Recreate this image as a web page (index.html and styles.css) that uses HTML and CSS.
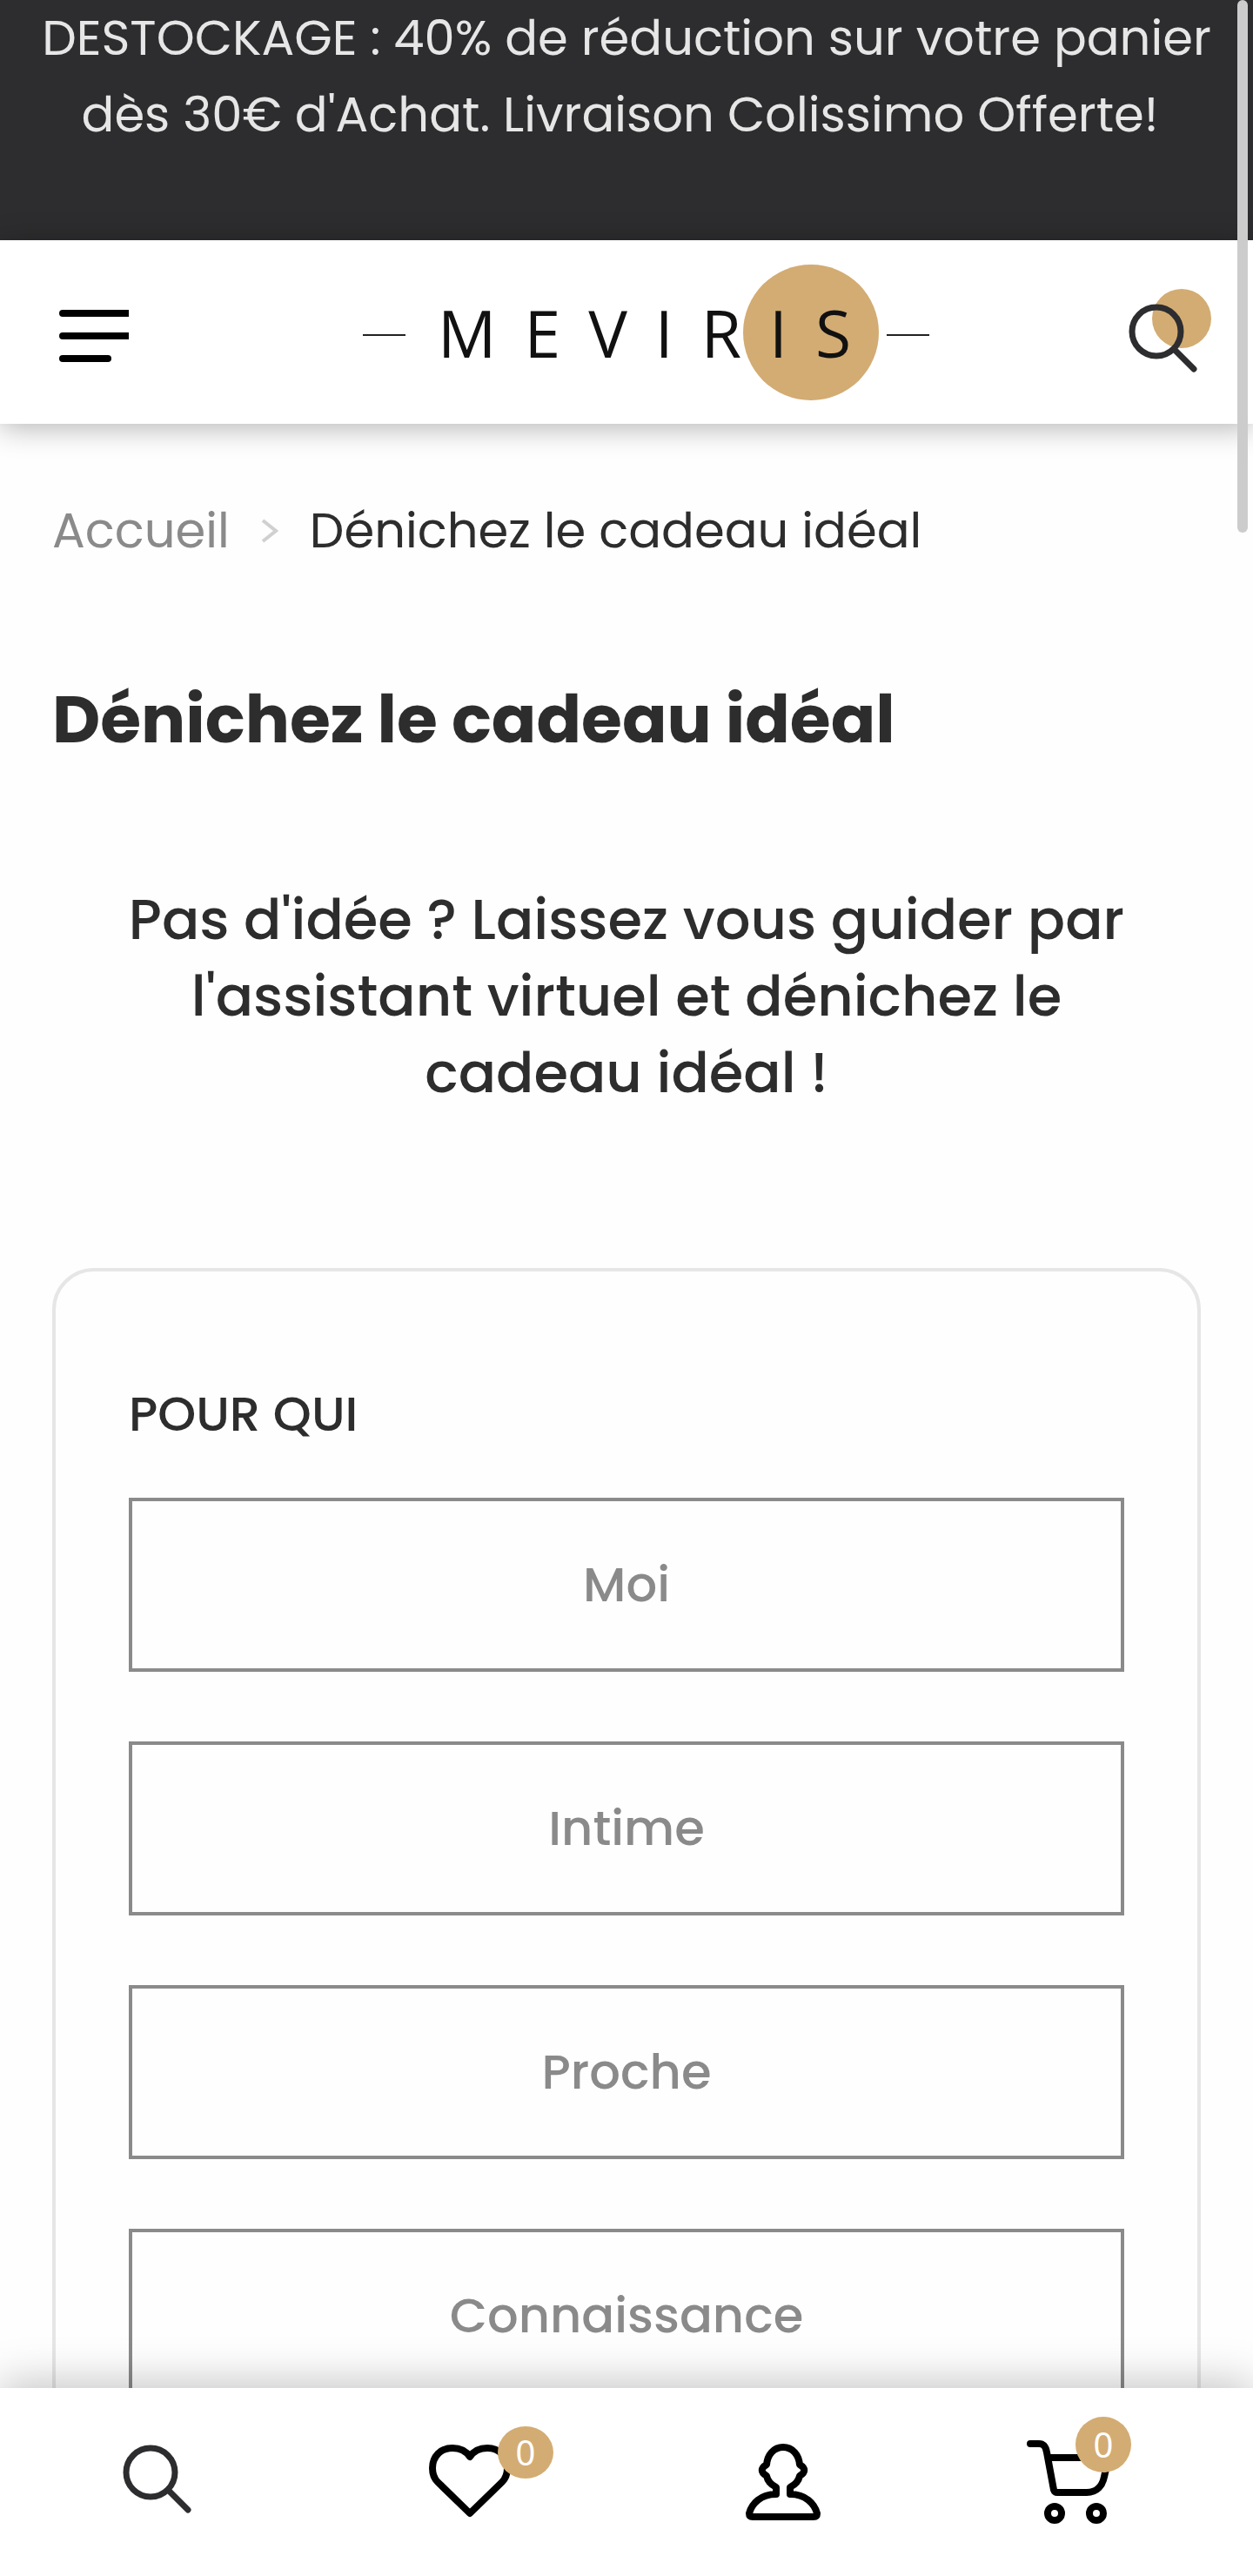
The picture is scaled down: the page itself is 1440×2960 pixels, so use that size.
FILE: index.html
```html
<!DOCTYPE html>
<html lang="fr">
<head>
    <meta charset="UTF-8">
    <meta name="viewport" content="width=device-width, initial-scale=1.0">
    <title>Dénichez le cadeau idéal - Meviris</title>
    <link rel="stylesheet" href="styles.css">
</head>
<body>
    <div class="banner">
        <p>DESTOCKAGE : 40% de réduction sur votre panier dès 30€ d'Achat. Livraison Colissimo Offerte!&nbsp;</p>
    </div>

    <header class="header">
        <button class="icon-button" aria-label="Menu">
            <svg width="80" height="68" viewBox="0 -8 80 68">
                <path d="M80 0H4a4 4 0 0 0 0 8H80zM80 26H4a4 4 0 0 0 0 8H80z"/>
                <rect y="52" width="60" height="8" rx="4"/>
            </svg>
        </button>
        <a class="logo" href="#" aria-label="Meviris">
            <svg width="652" height="156" viewBox="0 0 652 156">
                <circle cx="515" cy="78" r="78" fill="#d3ac73"/>
                <path d="M0 81H49M602 81H651" stroke="#222" stroke-width="2"/>
                <text class="logo-text" x="86" y="107">MEVIRIS</text>
            </svg>
        </a>
        <button class="icon-button" aria-label="Rechercher">
            <svg width="96" height="112" viewBox="0 0 96 112">
                <circle cx="61" cy="40" r="34" fill="#d3ac73"/>
                <g fill="none" stroke="#2d2d2f" stroke-width="7" stroke-linecap="round">
                    <circle cx="32" cy="55" r="28"/>
                    <path d="M53 76L75 98"/>
                </g>
            </svg>
        </button>
    </header>

    <main class="main">
        <nav class="breadcrumb" aria-label="Fil d'Ariane">
            <a href="#">Accueil</a>
            <svg width="20" height="28" viewBox="0 0 20 28">
                <path d="M2 2L17 14L2 26" fill="none" stroke="#d0d0d0" stroke-width="4"/>
            </svg>
            <span>Dénichez le cadeau idéal</span>
        </nav>

        <h1>Dénichez le cadeau idéal</h1>
        <p class="intro">Pas d'idée ? Laissez vous guider par l'assistant virtuel et dénichez le cadeau idéal !</p>

        <section class="card">
            <h2>POUR QUI</h2>
            <div class="choices">
                <button class="choice">Moi</button>
                <button class="choice">Intime</button>
                <button class="choice">Proche</button>
                <button class="choice">Connaissance</button>
            </div>
        </section>
    </main>

    <nav class="bottom-bar" aria-label="Navigation">
        <a href="#" aria-label="Rechercher">
            <svg width="96" height="112" viewBox="0 0 96 112">
                <g fill="none" stroke="#2d2d2f" stroke-width="7" stroke-linecap="round">
                    <circle cx="41" cy="45" r="28"/>
                    <path d="M62 66L84 88"/>
                </g>
            </svg>
        </a>
        <a href="#" aria-label="Favoris">
            <svg class="line-icon" width="96" height="112" viewBox="0 0 96 112">
                <path d="M48 27C44 21 37 17 28 17C14 17 5 27 5 40C5 47 7 52 11 56L48 92L85 56C89 52 91 47 91 40C91 27 82 17 68 17C59 17 52 21 48 27Z"/>
            </svg>
            <span class="badge badge-heart">0</span>
        </a>
        <a href="#" aria-label="Mon compte">
            <svg class="line-icon" width="96" height="112" viewBox="0 0 96 112">
                <path d="M48 16C37 16 30 25 29 36C22 40 22 45 29 49C30 54 34 59 40 62V70C22 70 12 81 9 92C9 95 10 96 13 96H83C86 96 87 95 87 92C84 81 74 70 56 70V62C62 59 66 54 67 49C74 45 74 40 67 36C66 25 59 16 48 16Z"/>
            </svg>
        </a>
        <a href="#" aria-label="Panier">
            <svg class="line-icon" width="160" height="112" viewBox="0 0 160 112">
                <path d="M4 12H14C20 12 22 16 23 22L31 65Q32 68 35 68H69C81 68 87 60 89 50L94 28H25"/>
                <circle cx="32" cy="92" r="8"/>
                <circle cx="80" cy="92" r="8"/>
            </svg>
            <span class="badge badge-cart">0</span>
        </a>
    </nav>

    <div class="scroll-thumb"></div>
</body>
</html>
```

FILE: styles.css
```css
* {
    box-sizing: border-box;
}
body {
    margin: 0;
    height: 100vh;
    display: flex;
    flex-direction: column;
    overflow: hidden;
    background: #fefefe;
    color: #2d2d2d;
    font-family: Poppins, Inter, sans-serif;
    font-size: 56px;
    line-height: 88px;
}
h1, h2, p {
    margin: 0;
}
a {
    color: inherit;
    text-decoration: none;
}
button {
    font: inherit;
    cursor: pointer;
}
svg {
    display: block;
}
.banner {
    flex: none;
    padding: 0 16px 100px;
    background: #2d2d2f;
    color: #e6e6e6;
    text-align: center;
}
.header {
    flex: none;
    display: flex;
    align-items: center;
    justify-content: space-between;
    height: 211px;
    padding: 0 47px 0 68px;
    background: #fff;
    box-shadow: 0 4px 32px rgba(0, 0, 0, 0.3);
    position: relative;
    z-index: 1;
}
.icon-button {
    padding: 0;
    border: 0;
    background: none;
}
.logo {
    margin-left: 40px;
}
.logo-text {
    font-family: "Open Sans", sans-serif;
    font-size: 75px;
    letter-spacing: 32px;
    fill: #111;
}
.main {
    flex: 1;
    min-height: 0;
    overflow: hidden;
    padding: 79px 60px 0;
}
.breadcrumb {
    display: flex;
    align-items: center;
    gap: 36px;
}
.breadcrumb a {
    color: #8a8a8a;
}
h1 {
    margin-top: 129px;
    font-size: 76px;
    font-weight: 700;
}
.intro {
    margin-top: 142px;
    padding: 0 80px;
    font-size: 64px;
    font-weight: 500;
    text-align: center;
}
.card {
    margin-top: 180px;
    padding: 120px 84px;
    border: 4px solid #e6e6e6;
    border-radius: 48px;
}
h2 {
    margin-bottom: 52px;
    font-size: 56px;
    font-weight: 500;
}
.choices {
    display: grid;
    gap: 80px;
}
.choice {
    height: 200px;
    border: 4px solid #8a8a8a;
    background: transparent;
    color: #8a8a8a;
    font-weight: 500;
}
.bottom-bar {
    flex: none;
    display: grid;
    grid-template-columns: repeat(4, 1fr);
    height: 216px;
    background: #fff;
    box-shadow: 0 -4px 48px rgba(0, 0, 0, 0.25);
    position: relative;
    z-index: 1;
}
.bottom-bar a {
    display: flex;
    align-items: center;
    justify-content: center;
    position: relative;
}
.line-icon {
    fill: none;
    stroke: #000;
    stroke-width: 8px;
    stroke-linecap: round;
    stroke-linejoin: round;
}
.badge {
    position: absolute;
    width: 64px;
    height: 64px;
    border-radius: 50%;
    background: #d3ac73;
    color: #fff;
    font-family: "Noto Sans", sans-serif;
    font-size: 40px;
    line-height: 64px;
    text-align: center;
}
.badge-heart {
    top: 44px;
    left: calc(50% + 32px);
    height: 60px;
    line-height: 60px;
}
.badge-cart {
    top: 33px;
    left: calc(50% - 24px);
}
.scroll-thumb {
    position: fixed;
    top: 0;
    right: 6px;
    z-index: 2;
    width: 12px;
    height: 612px;
    border-radius: 6px;
    background: #ccc;
}
```
